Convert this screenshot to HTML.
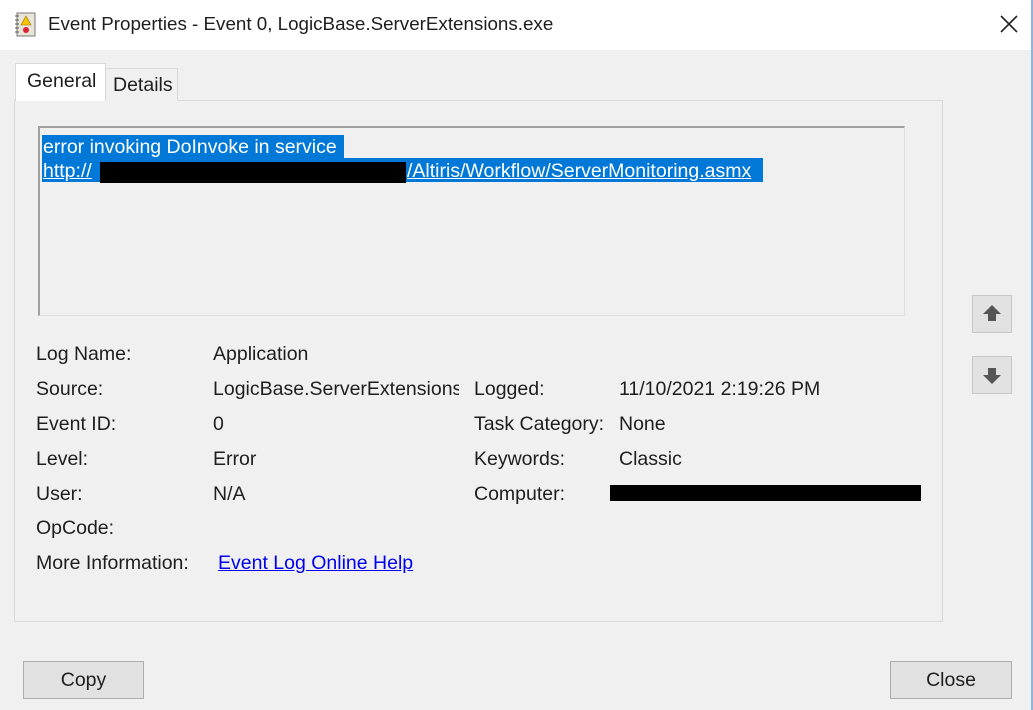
<!DOCTYPE html>
<html><head><style>
body{margin:0;width:1033px;height:710px;background:#f0f0f0;font-family:"Liberation Sans",sans-serif;color:#1e1e1e;position:relative;overflow:hidden}
.a{position:absolute;white-space:nowrap;font-size:19.5px;line-height:20px}
.btn{position:absolute;background:#e1e1e1;border:1px solid #adadad;box-sizing:border-box;text-align:center;font-size:19.5px}
</style></head><body>
<div style="position:absolute;left:0;top:0;width:1033px;height:50px;background:#fff"></div>
<div style="position:absolute;right:0;top:0;width:2px;height:710px;background:#8fb4e0"></div>
<svg style="position:absolute;left:14px;top:12px" width="24" height="26" viewBox="0 0 24 26">
<rect x="3" y="1" width="18" height="23" fill="#e8e4d8" stroke="#777"/>
<path d="M1 4h4M1 8h4M1 12h4M1 16h4M1 20h4" stroke="#555"/>
<path d="M12 4l5 9h-10z" fill="#f5c400" stroke="#a07000" stroke-width=".6"/>
<circle cx="12" cy="18" r="3" fill="#d23"/>
</svg>
<div class="a" style="left:48px;top:14px;font-size:18.8px">Event Properties - Event 0, LogicBase.ServerExtensions.exe</div>
<svg style="position:absolute;left:1000px;top:15px" width="18" height="18" viewBox="0 0 18 18"><path d="M1 1L17 17M17 1L1 17" stroke="#222" stroke-width="1.6"/></svg>

<div style="position:absolute;left:14px;top:100px;width:929px;height:522px;border:1px solid #d9d9d9;background:#f0f0f0;box-sizing:border-box"></div>
<div style="position:absolute;left:105px;top:68px;width:73px;height:33px;border:1px solid #d9d9d9;border-bottom:none;background:#f0f0f0;box-sizing:border-box"></div>
<div class="a" style="left:113px;top:75px">Details</div>
<div style="position:absolute;left:15px;top:63px;width:91px;height:39px;border:1px solid #d9d9d9;border-bottom:none;background:#fff;box-sizing:border-box"></div>
<div class="a" style="left:27px;top:71px">General</div>
<div style="position:absolute;left:15px;top:101px;width:927px;height:520px;background:#f0f0f0"></div>

<div style="position:absolute;left:38px;top:126px;width:867px;height:190px;border-top:2px solid #a0a0a0;border-left:2px solid #a0a0a0;border-right:1px solid #e0e0e0;border-bottom:1px solid #e0e0e0;box-sizing:border-box"></div>
<div style="position:absolute;left:42px;top:135px;width:302px;height:23px;background:#0078d7"></div>
<div style="position:absolute;left:42px;top:158px;width:721px;height:24px;background:#0078d7"></div>
<div class="a" style="left:43px;top:137px;color:#fff">error invoking DoInvoke in service</div>
<div class="a" style="left:43px;top:161px;color:#fff;text-decoration:underline">http://</div>
<div style="position:absolute;left:100px;top:162px;width:306px;height:21px;background:#000"></div>
<div class="a" style="left:407px;top:161px;color:#fff;text-decoration:underline">/Altiris/Workflow/ServerMonitoring.asmx</div>

<div class="a" style="left:36px;top:344px">Log Name:</div><div class="a" style="left:213px;top:344px">Application</div>
<div class="a" style="left:36px;top:379px">Source:</div><div class="a" style="left:213px;top:379px;width:246px;overflow:hidden">LogicBase.ServerExtensions.exe</div>
<div class="a" style="left:36px;top:414px">Event ID:</div><div class="a" style="left:213px;top:414px">0</div>
<div class="a" style="left:36px;top:449px">Level:</div><div class="a" style="left:213px;top:449px">Error</div>
<div class="a" style="left:36px;top:484px">User:</div><div class="a" style="left:213px;top:484px">N/A</div>
<div class="a" style="left:36px;top:518px">OpCode:</div>
<div class="a" style="left:36px;top:553px">More Information:</div><div class="a" style="left:218px;top:553px;color:#0000ee;text-decoration:underline">Event Log Online Help</div>
<div class="a" style="left:474px;top:379px">Logged:</div><div class="a" style="left:619px;top:379px">11/10/2021 2:19:26 PM</div>
<div class="a" style="left:474px;top:414px">Task Category:</div><div class="a" style="left:619px;top:414px">None</div>
<div class="a" style="left:474px;top:449px">Keywords:</div><div class="a" style="left:619px;top:449px">Classic</div>
<div class="a" style="left:474px;top:484px">Computer:</div>
<div style="position:absolute;left:610px;top:485px;width:311px;height:16px;background:#000"></div>

<div class="btn" style="left:972px;top:295px;width:40px;height:38px;border-color:#c8c8c8"><svg width="38" height="36" viewBox="0 0 38 36"><path d="M19 9l9 9h-5v7h-8v-7h-5z" fill="#555"/></svg></div>
<div class="btn" style="left:972px;top:356px;width:40px;height:38px;border-color:#c8c8c8"><svg width="38" height="36" viewBox="0 0 38 36"><path d="M19 27l9-9h-5v-7h-8v7h-5z" fill="#555"/></svg></div>

<div class="btn" style="left:23px;top:661px;width:121px;height:38px;line-height:36px">Copy</div>
<div class="btn" style="left:890px;top:661px;width:122px;height:38px;line-height:36px">Close</div>
</body></html>
